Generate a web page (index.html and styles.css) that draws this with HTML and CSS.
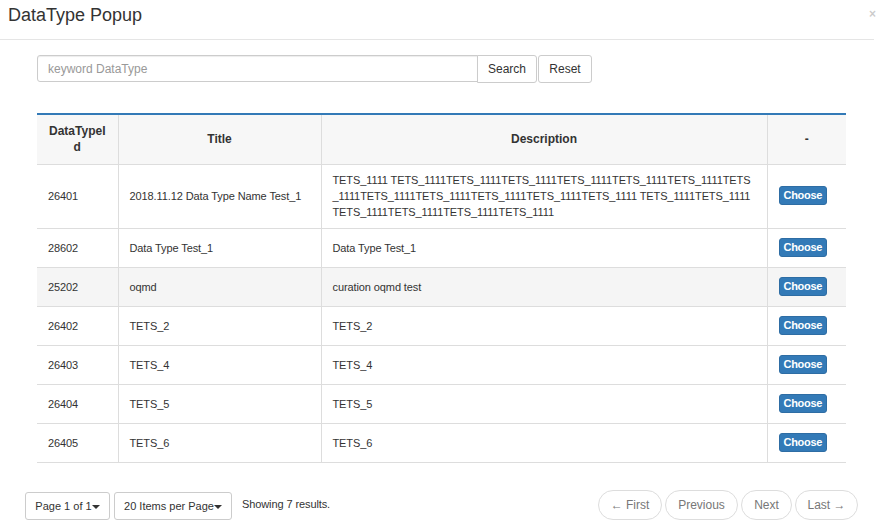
FILE: index.html
```html
<!DOCTYPE html>
<html>
<head>
<meta charset="utf-8">
<link rel="stylesheet" href="styles.css">
</head>
<body>
<div class="modal">
  <div class="modal-header">
    <h4 class="modal-title">DataType Popup</h4>
    <span class="close">×</span>
  </div>
  <div class="modal-body">
    <div class="search">
      <input class="search-input" type="text" placeholder="keyword DataType">
      <button class="btn btn-search">Search</button>
      <button class="btn btn-reset">Reset</button>
    </div>
    <table class="grid">
      <colgroup>
        <col class="c-id"><col class="c-title"><col class="c-desc"><col class="c-act">
      </colgroup>
      <thead>
        <tr><th class="th-id">DataTypeId</th><th>Title</th><th>Description</th><th>-</th></tr>
      </thead>
      <tbody>
        <tr class="tall"><td>26401</td><td>2018.11.12 Data Type Name Test_1</td><td class="desc"><div class="desc-text">TETS_1111 TETS_1111TETS_1111TETS_1111TETS_1111TETS_1111TETS_1111TETS_1111TETS_1111TETS_1111TETS_1111TETS_1111TETS_1111 TETS_1111TETS_1111 TETS_1111TETS_1111TETS_1111TETS_1111</div></td><td><button class="choose">Choose</button></td></tr>
        <tr><td>28602</td><td>Data Type Test_1</td><td>Data Type Test_1</td><td><button class="choose">Choose</button></td></tr>
        <tr class="hover"><td>25202</td><td>oqmd</td><td>curation oqmd test</td><td><button class="choose">Choose</button></td></tr>
        <tr><td>26402</td><td>TETS_2</td><td>TETS_2</td><td><button class="choose">Choose</button></td></tr>
        <tr><td>26403</td><td>TETS_4</td><td>TETS_4</td><td><button class="choose">Choose</button></td></tr>
        <tr><td>26404</td><td>TETS_5</td><td>TETS_5</td><td><button class="choose">Choose</button></td></tr>
        <tr><td>26405</td><td>TETS_6</td><td>TETS_6</td><td><button class="choose">Choose</button></td></tr>
      </tbody>
    </table>
  </div>
  <div class="modal-footer">
    <div class="pg-left">
      <button class="btn drop drop-page">Page 1 of 1<span class="caret"></span></button>
      <button class="btn drop drop-size">20 Items per Page<span class="caret"></span></button>
      <span class="showing">Showing 7 results.</span>
    </div>
    <div class="pager">
      <button class="pill pill-first">← First</button>
      <button class="pill pill-prev">Previous</button>
      <button class="pill pill-next">Next</button>
      <button class="pill pill-last">Last →</button>
    </div>
  </div>
</div>
</body>
</html>
```

FILE: styles.css
```css
* { box-sizing: border-box; }
html, body { margin: 0; padding: 0; background: #fff; }
body {
  font-family: "Liberation Sans", Arial, sans-serif;
  font-size: 12px;
  color: #333;
  width: 885px;
  height: 530px;
  overflow: hidden;
}
.modal { width: 874px; }
.modal-header {
  height: 40px;
  border-bottom: 1px solid #e5e5e5;
  display: flex;
  align-items: flex-start;
  justify-content: space-between;
  padding: 4px 0 0 8px;
}
.modal-title {
  margin: 0;
  font-size: 18px;
  font-weight: normal;
  line-height: 22px;
  color: #333;
}
.close {
  font-size: 12px;
  font-weight: bold;
  color: #000;
  opacity: 0.2;
  line-height: 14px;
  padding-top: 3px;
  margin-right: -2px;
}
.modal-body { padding: 15px 28px 0 37px; }
.search { display: flex; height: 27px; }
.search-input {
  width: 441px;
  height: 27px;
  border: 1px solid #ccc;
  border-radius: 3px 0 0 3px;
  padding: 0 10px;
  font-family: inherit;
  font-size: 12px;
  color: #555;
  box-shadow: inset 0 1px 1px rgba(0,0,0,.075);
  outline: none;
}
.search-input::placeholder { color: #999; }
.btn {
  font-family: inherit;
  font-size: 12px;
  color: #333;
  background: #fff;
  border: 1px solid #ccc;
  border-radius: 3px;
  padding: 0 10px;
  height: 28px;
  cursor: pointer;
}
.btn-search { border-radius: 0 3px 3px 0; margin-left: -1px; width: 60px; padding: 0; }
.btn-reset { margin-left: 1px; width: 54px; padding: 0; }

.grid {
  margin-top: 31px;
  width: 809px;
  border-collapse: collapse;
  table-layout: fixed;
  border-top: 2px solid #337ab7;
}
.c-id { width: 81px; }
.c-title { width: 203px; }
.c-desc { width: 446px; }
.c-act { width: 79px; }
.grid th {
  background: #f7f7f7;
  font-weight: bold;
  text-align: center;
  line-height: 16px;
  padding: 8px 10px;
  height: 50px;
  border-bottom: 1px solid #ddd;
  border-left: 1px solid #ddd;
}
.grid th.th-id { word-break: break-all; padding: 8px 9px; }
.grid th:first-child, .grid td:first-child { border-left: none; }
.grid td {
  font-size: 11px;
  letter-spacing: -0.1px;
  line-height: 16px;
  padding: 8px 8px 8px 11px;
  border-bottom: 1px solid #ddd;
  border-left: 1px solid #ddd;
  vertical-align: middle;
  height: 39px;
}
.grid tr.tall td { padding-top: 7px; padding-bottom: 8px; }
.grid td.desc { letter-spacing: -0.1px; }
.desc-text { width: 420px; word-break: break-all; }
.grid tr.hover td { background: #f5f5f5; }
.choose {
  font-family: inherit;
  font-size: 11px;
  font-weight: bold;
  letter-spacing: -0.3px;
  color: #fff;
  background: #337ab7;
  border: 1px solid #2e6da4;
  border-radius: 3px;
  padding: 1px 4px;
  line-height: 15px;
  display: block;
}

.modal-footer {
  display: flex;
  justify-content: space-between;
  align-items: flex-start;
  padding: 27px 16px 0 25px;
}
.pg-left { display: flex; align-items: flex-start; }
.drop {
  height: 28px;
  margin-top: 2px;
  margin-right: 4px;
  padding: 0;
  font-size: 11px;
  text-align: center;
}
.drop-page { width: 85px; }
.drop-size { width: 118px; }
.caret {
  display: inline-block;
  width: 0; height: 0;
  border-top: 4px solid #333;
  border-left: 4px solid transparent;
  border-right: 4px solid transparent;
  vertical-align: middle;
  margin-left: 0;
}
.showing { margin-left: 6px; line-height: 16px; padding-top: 6px; font-size: 11px; letter-spacing: -0.1px; }
.pager { display: flex; gap: 3px; }
.pill {
  font-family: inherit;
  font-size: 12px;
  color: #777;
  background: #fff;
  border: 1px solid #ddd;
  border-radius: 15px;
  height: 30px;
  padding: 0;
}
.pill-first { width: 64px; }
.pill-prev { width: 73px; }
.pill-next { width: 51px; }
.pill-last { width: 63px; }
```
